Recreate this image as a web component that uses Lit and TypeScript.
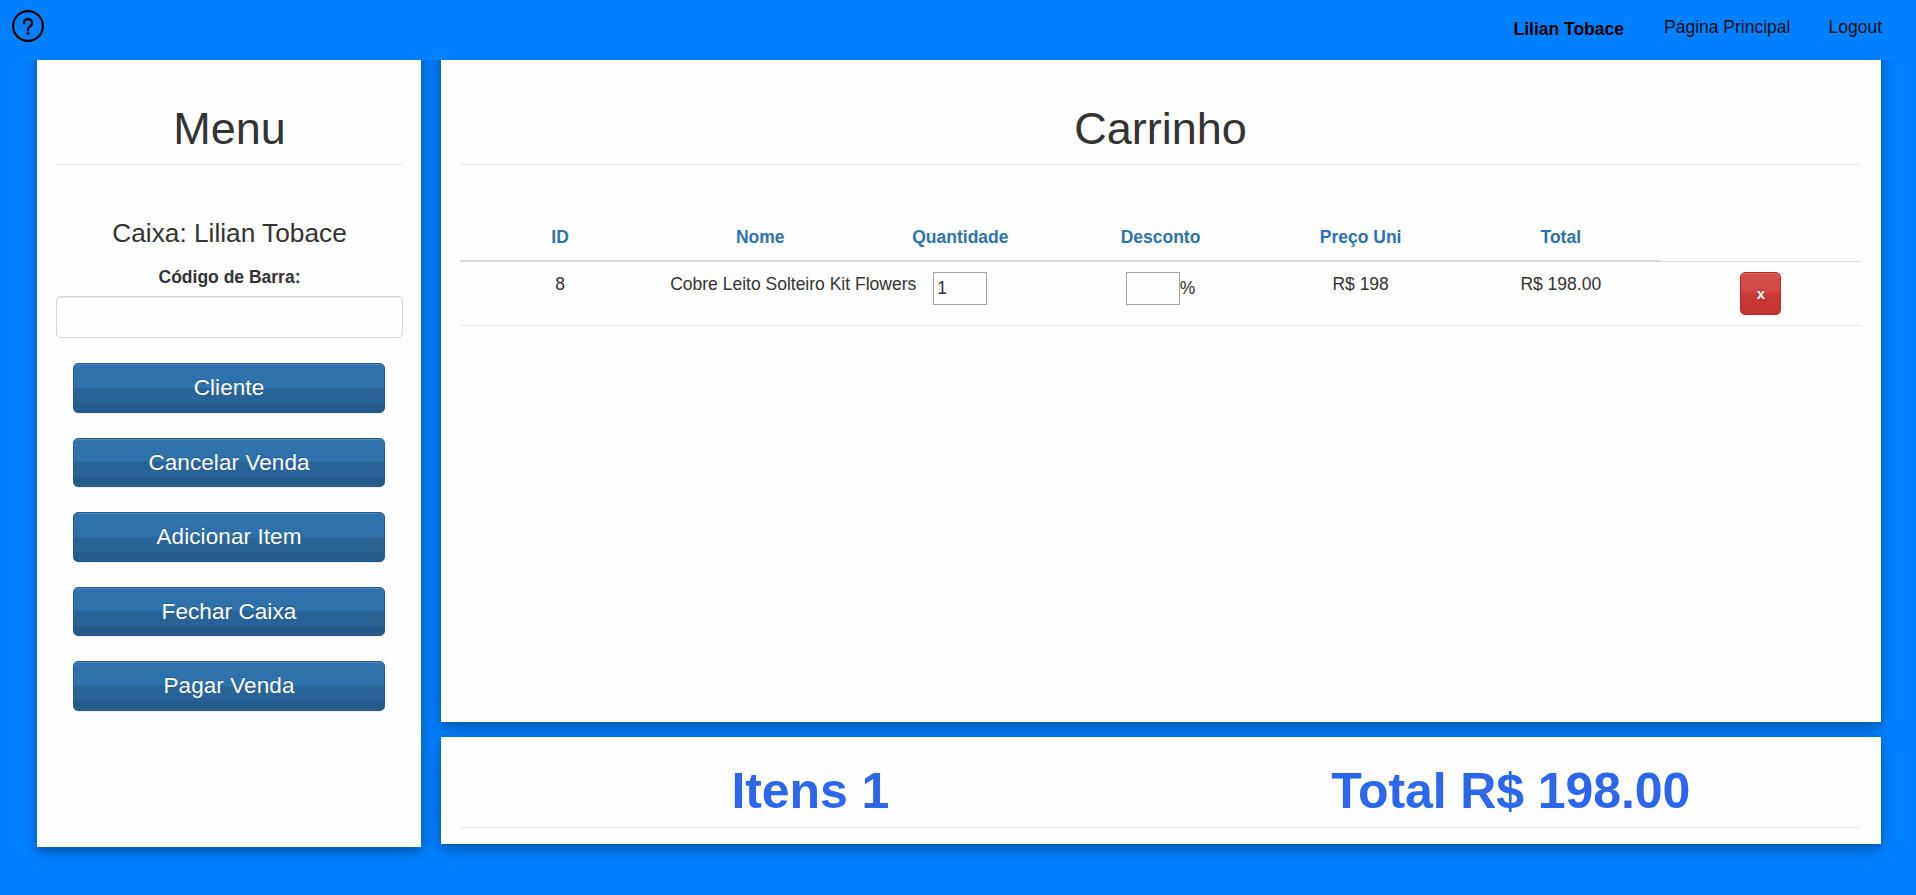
import { LitElement, html, css } from "lit";
import { customElement, property } from "lit/decorators.js";

interface CartItem {
  id: number;
  name: string;
  quantity: number;
  unit: string;
  total: string;
}

@customElement("app-header")
class AppHeader extends LitElement {
  @property() user = "";

  static styles = css`
    :host {
      position: absolute;
      top: 0;
      left: 0;
      right: 0;
      z-index: 2;
      display: flex;
      justify-content: space-between;
      box-sizing: border-box;
      height: 60px;
      padding: 10px 34px 0 12px;
      background: #0080ff;
      color: #000;
      font-size: 17.5px;
      line-height: 25px;
    }
    .help {
      width: 32px;
      height: 32px;
    }
    nav {
      display: flex;
      align-items: flex-start;
      padding-top: 5px;
    }
    .user {
      font-weight: bold;
      padding-top: 2px;
      margin-right: 40px;
    }
    .link {
      color: #111;
    }
    .link + .link {
      margin-left: 38px;
    }
  `;

  render() {
    return html`
      <svg class="help" viewBox="0 0 32 32" fill="none" stroke="#000">
        <circle cx="16" cy="16" r="14.9" stroke-width="2.2" />
        <path d="M12 13.2V12.9a4 4 0 1 1 6.2 3.4c-1.5 1-2.2 1.6-2.2 3v.9" stroke-width="2.4" stroke-linecap="round" />
        <circle cx="16" cy="23.5" r="1.6" fill="#000" stroke="none" />
      </svg>
      <nav>
        <span class="user">${this.user}</span>
        <span class="link">Página Principal</span>
        <span class="link">Logout</span>
      </nav>
    `;
  }
}

@customElement("side-menu")
class SideMenu extends LitElement {
  @property() user = "";

  static styles = css`
    :host {
      display: flex;
      flex-direction: column;
      box-sizing: border-box;
      padding: 104px 18px 0 19px;
      text-align: center;
    }
    h1 {
      margin: 0;
      padding-bottom: 10px;
      border-bottom: 1px solid #eaeaea;
      font-size: 45px;
      font-weight: 400;
      line-height: 50px;
    }
    .cashier {
      margin-top: 53px;
      font-size: 26.25px;
      line-height: 30px;
    }
    label {
      margin-top: 17px;
      font-weight: bold;
      line-height: 25px;
    }
    input {
      box-sizing: border-box;
      width: 100%;
      height: 42px;
      margin-top: 6px;
      border: 1px solid #d4d4d4;
      border-radius: 5px;
      background: #fefefe;
      box-shadow: inset 0 1px 1px rgba(0, 0, 0, 0.075);
    }
    .actions {
      display: flex;
      flex-direction: column;
      gap: 25px;
      padding: 25px 18px 0 17px;
    }
    button {
      box-sizing: border-box;
      height: 49.5px;
      padding: 1px 0 0;
      border: 1px solid #265a88;
      border-radius: 5px;
      background: linear-gradient(#3073b0, #2d70aa 49%, #2a6496 50%, #296296 80%, #265a88 84%);
      box-shadow: inset 0 1px 0 rgba(255, 255, 255, 0.15), 0 1px 1px rgba(0, 0, 0, 0.075);
      color: #fff;
      font: 22.5px/30px "Liberation Sans", Arial, sans-serif;
      letter-spacing: 0.08px;
      text-shadow: 0 -1px 0 rgba(0, 0, 0, 0.2);
    }
  `;

  private actions = ["Cliente", "Cancelar Venda", "Adicionar Item", "Fechar Caixa", "Pagar Venda"];

  render() {
    return html`
      <h1>Menu</h1>
      <div class="cashier">Caixa: ${this.user}</div>
      <label for="code">Código de Barra:</label>
      <input id="code" type="text" />
      <div class="actions">${this.actions.map((a) => html`<button>${a}</button>`)}</div>
    `;
  }
}

@customElement("cart-panel")
class CartPanel extends LitElement {
  @property({ attribute: false }) items: CartItem[] = [];

  static styles = css`
    :host {
      display: block;
      box-sizing: border-box;
      padding: 104px 20px 0 19px;
      text-align: center;
    }
    h1 {
      margin: 0 0 59px;
      padding-bottom: 10px;
      border-bottom: 1px solid #eaeaea;
      font-size: 45px;
      font-weight: 400;
      line-height: 50px;
    }
    .row {
      display: grid;
      grid-template-columns: repeat(7, minmax(0, 1fr));
    }
    .th {
      box-sizing: border-box;
      height: 38px;
      border-bottom: 2px solid #d8d8d8;
      padding-top: 1px;
      color: #2e72b0;
      font-weight: bold;
      line-height: 25px;
    }
    .th:last-child {
      border-bottom-width: 1px;
    }
    .item {
      height: 63px;
      border-bottom: 1px solid #eaeaea;
    }
    .td {
      padding-top: 10px;
      line-height: 25px;
      white-space: nowrap;
    }
    .name {
      padding-left: 10px;
      text-align: left;
    }
    .field {
      display: flex;
      align-items: center;
      justify-content: center;
      height: 33px;
      padding-top: 10px;
    }
    input {
      box-sizing: border-box;
      width: 54px;
      height: 33px;
      padding: 0 3px;
      border: 1px solid #a6a6a6;
      background: #fefefe;
      color: #333;
      font: 17.5px "Liberation Sans", Arial, sans-serif;
    }
    .remove {
      width: 41px;
      height: 43px;
      margin-top: 10px;
      padding: 0;
      border: 1px solid #b92c28;
      border-radius: 5px;
      background: linear-gradient(#d2504b, #d04843 42%, #c93a36 52%, #c33430);
      box-shadow: inset 0 1px 0 rgba(255, 255, 255, 0.15);
      color: #fff;
      font: bold 15px "Liberation Sans", Arial, sans-serif;
      text-shadow: 0 -1px 0 rgba(0, 0, 0, 0.2);
    }
  `;

  private heads = ["ID", "Nome", "Quantidade", "Desconto", "Preço Uni", "Total", ""];

  render() {
    return html`
      <h1>Carrinho</h1>
      <div class="row">${this.heads.map((h) => html`<div class="th">${h}</div>`)}</div>
      ${this.items.map(
        (i) => html`<div class="row item">
          <div class="td">${i.id}</div>
          <div class="td name">${i.name}</div>
          <div class="field"><input type="text" .value=${String(i.quantity)} /></div>
          <div class="field"><input type="text" /><span>%</span></div>
          <div class="td">${i.unit}</div>
          <div class="td">${i.total}</div>
          <div><button class="remove">x</button></div>
        </div>`
      )}
    `;
  }
}

@customElement("app-root")
class AppRoot extends LitElement {
  static styles = css`
    :host {
      position: relative;
      display: block;
      box-sizing: border-box;
      height: 895px;
      overflow: hidden;
      background: #0080ff;
      color: #333;
      font: 17.5px/25px "Liberation Sans", Arial, sans-serif;
    }
    .page {
      display: grid;
      grid-template-columns: 384px 1440px;
      column-gap: 20px;
      align-items: start;
      padding-left: 37px;
    }
    .main {
      display: grid;
      grid-template-rows: 722px 107px;
      row-gap: 15px;
    }
    .card {
      background: #fefefe;
      box-shadow: 0 4px 8px 0 rgba(0, 0, 0, 0.2), 0 6px 20px 0 rgba(0, 0, 0, 0.19);
    }
    .menu {
      height: 847px;
    }
    .totals {
      padding: 0 20px 0 19px;
    }
    .sums {
      display: grid;
      grid-template-columns: 1fr 1fr;
      height: 90px;
      border-bottom: 1px solid #eaeaea;
      color: #2c66ea;
      font-size: 50px;
      font-weight: bold;
      letter-spacing: -0.1px;
      line-height: 109px;
      text-align: center;
    }
  `;

  private user = "Lilian Tobace";
  private items: CartItem[] = [
    { id: 8, name: "Cobre Leito Solteiro Kit Flowers", quantity: 1, unit: "R$ 198", total: "R$ 198.00" },
  ];

  render() {
    return html`
      <app-header .user=${this.user}></app-header>
      <div class="page">
        <side-menu class="card menu" .user=${this.user}></side-menu>
        <div class="main">
          <cart-panel class="card" .items=${this.items}></cart-panel>
          <div class="card totals">
            <div class="sums"><span>Itens 1</span><span>Total R$ 198.00</span></div>
          </div>
        </div>
      </div>
    `;
  }
}
